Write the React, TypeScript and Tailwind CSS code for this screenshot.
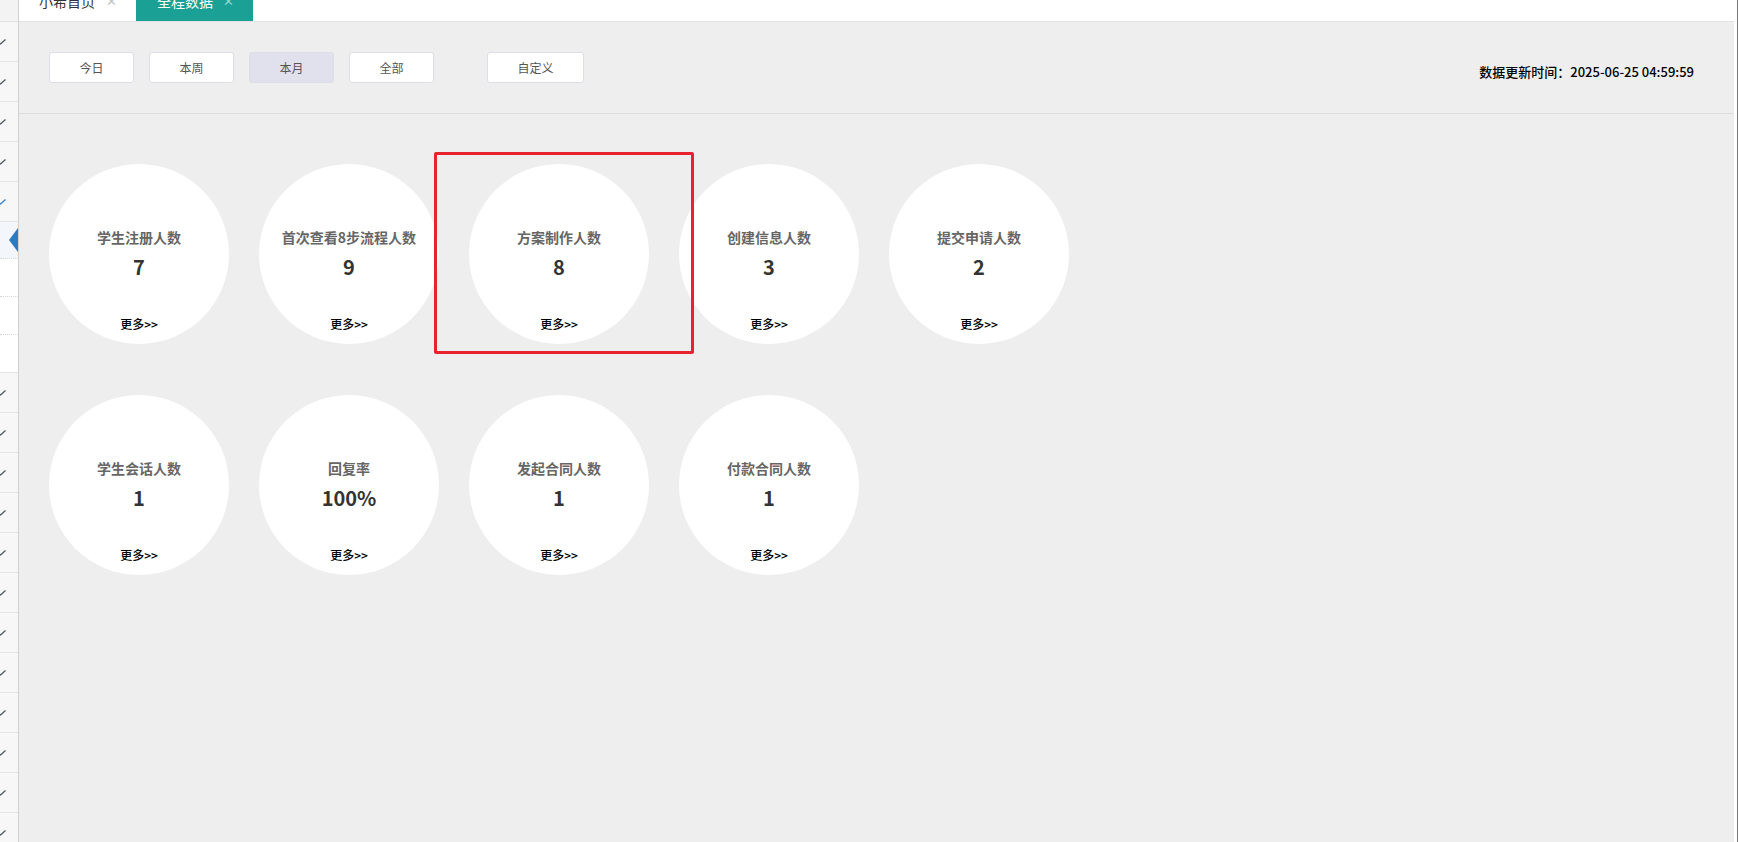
import type { FC } from 'react'

const FONT = "font-['Noto_Sans_CJK_SC','Noto_Sans',sans-serif]"

interface Stat {
  readonly label: string
  readonly value: string
}

const ROW_ONE: readonly Stat[] = [
  { label: '学生注册人数', value: '7' },
  { label: '首次查看8步流程人数', value: '9' },
  { label: '方案制作人数', value: '8' },
  { label: '创建信息人数', value: '3' },
  { label: '提交申请人数', value: '2' },
]

const ROW_TWO: readonly Stat[] = [
  { label: '学生会话人数', value: '1' },
  { label: '回复率', value: '100%' },
  { label: '发起合同人数', value: '1' },
  { label: '付款合同人数', value: '1' },
]

const FILTERS = ['今日', '本周', '本月', '全部']

const Check: FC<{ blue?: boolean }> = ({ blue }) => (
  <svg width="8" height="6" viewBox="0 0 8 6" className="-ml-[2px]">
    <path
      d="M0.5 3.2 L2.6 5 L7.5 0.6"
      fill="none"
      stroke={blue ? '#2d7cc6' : '#4a5563'}
      strokeWidth="1.3"
    />
  </svg>
)

const Sidebar: FC = () => {
  const topRows = [false, false, false, false, true]
  const bottomRows = Array.from({ length: 12 })
  return (
    <aside className="flex w-[19px] shrink-0 flex-col border-r border-[#d0d0d0] bg-[#f7f7f7]">
      <div className="h-[22px] shrink-0 border-b border-[#e2e2e2] bg-[#f3f3f3]" />
      {topRows.map((blue, i) => (
        <div
          key={`t${i}`}
          className="flex h-[40px] shrink-0 items-center border-b border-[#e4e4e4]"
        >
          <Check blue={blue} />
        </div>
      ))}
      <div className="flex h-[37px] shrink-0 items-center justify-end border-b border-dotted border-[#d6d6d6] bg-[#f3f6fb]">
        <div className="h-0 w-0 border-y-[12px] border-r-[9px] border-y-transparent border-r-[#2b7bc3]" />
      </div>
      <div className="h-[38px] shrink-0 border-b border-dotted border-[#d6d6d6] bg-white" />
      <div className="h-[38px] shrink-0 border-b border-dotted border-[#d6d6d6] bg-white" />
      <div className="h-[38px] shrink-0 border-b border-[#e4e4e4] bg-white" />
      {bottomRows.map((_, i) => (
        <div
          key={`b${i}`}
          className="flex h-[40px] shrink-0 items-center border-b border-[#e4e4e4]"
        >
          <Check />
        </div>
      ))}
    </aside>
  )
}

const TabBar: FC = () => (
  <div className="flex h-[22px] shrink-0 items-end overflow-hidden border-b border-[#e2e2e2] bg-white">
    <div className="flex h-[40px] w-[117px] shrink-0 items-center gap-[11px] pl-[20px] text-[14px] text-[#333]">
      <span>小希首页</span>
      <span className="text-[13px] text-[#c4c4c4]">✕</span>
    </div>
    <div className="flex h-[40px] w-[117px] shrink-0 items-center gap-[10px] bg-[#1aa094] pl-[21px] text-[14px] text-white">
      <span>全程数据</span>
      <span className="text-[13px] text-[#8fd3cc]">✕</span>
    </div>
  </div>
)

const FilterBar: FC = () => (
  <div className="flex h-[92px] shrink-0 items-start justify-between border-b border-[#dcdcdc] pl-[30px] pr-[40px]">
    <div className="mt-[30px] flex items-center">
      {FILTERS.map((label, i) => (
        <button
          key={label}
          type="button"
          className={`mr-[15px] flex h-[31px] w-[85px] items-center justify-center rounded-[3px] border border-[#dcdfe6] text-[12px] text-[#555] ${
            i === 2 ? 'bg-[#e1e1ed]' : 'bg-white'
          }`}
        >
          {label}
        </button>
      ))}
      <button
        type="button"
        className="ml-[38px] flex h-[31px] w-[97px] items-center justify-center rounded-[3px] border border-[#dcdfe6] bg-white text-[12px] text-[#555]"
      >
        自定义
      </button>
    </div>
    <p className="mt-[41px] text-[13px] font-medium leading-[18px] text-black">
      数据更新时间：2025-06-25 04:59:59
    </p>
  </div>
)

const StatCircle: FC<{ stat: Stat }> = ({ stat }) => (
  <div className="flex h-[180px] w-[180px] shrink-0 flex-col items-center rounded-full bg-white pt-[63px]">
    <p className="text-[14px] font-bold leading-[20px] text-[#666]">{stat.label}</p>
    <p className="mt-[6px] text-[20px] font-semibold leading-[28px] text-[#333]">
      {stat.value}
    </p>
    <p className="mt-[35px] cursor-pointer text-[12px] font-medium leading-[16px] text-black">
      更多&gt;&gt;
    </p>
  </div>
)

export default function App() {
  return (
    <div className={`relative flex h-[842px] w-full overflow-hidden bg-white ${FONT}`}>
      <Sidebar />
      <main className="flex min-w-0 flex-1 flex-col bg-[#eeeeee]">
        <TabBar />
        <FilterBar />
        <section className="flex flex-col gap-[51px] pl-[30px] pt-[50px]">
          <div className="flex gap-[30px]">
            {ROW_ONE.map((s) => (
              <StatCircle key={s.label} stat={s} />
            ))}
          </div>
          <div className="flex gap-[30px]">
            {ROW_TWO.map((s) => (
              <StatCircle key={s.label} stat={s} />
            ))}
          </div>
        </section>
      </main>
      <div className="w-[4px] shrink-0 border-r border-[#777] bg-white" />
      <div className="pointer-events-none absolute left-[434px] top-[152px] h-[202px] w-[260px] rounded-[2px] border-[3px] border-[#e8222e]" />
    </div>
  )
}
